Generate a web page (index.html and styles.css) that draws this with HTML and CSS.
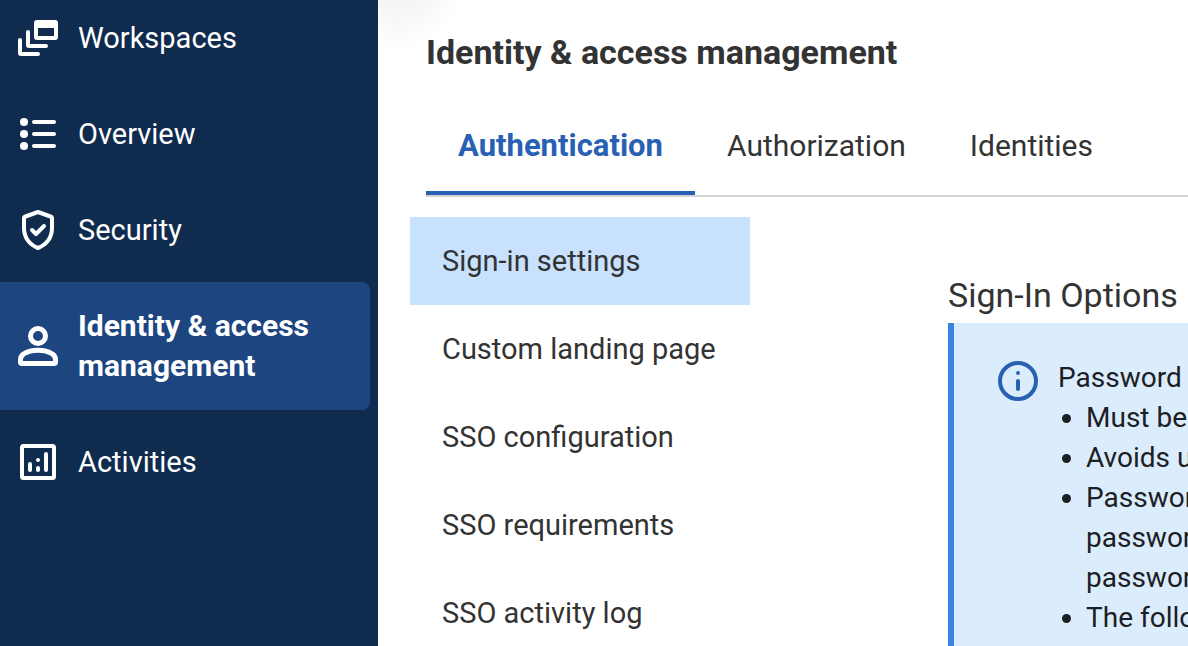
FILE: index.html
```html
<!DOCTYPE html>
<html lang="en">

<head>
    <meta charset="UTF-8" />
    <meta name="viewport" content="width=device-width, initial-scale=1.0" />
    <title>Identity &amp; access management</title>
    <link rel="stylesheet" href="styles.css">
</head>

<body>
    <aside class="sidebar">
        <nav class="menu">
            <a href="#" class="menu-item">
                <svg class="icon" viewBox="0 0 48 48" fill="none" stroke="currentColor" stroke-width="4" stroke-linecap="round" stroke-linejoin="round">
                    <rect x="22" y="8" width="20" height="16" rx="1" />
                    <path d="M22 8h20v5H22z" fill="currentColor" stroke-width="2" />
                    <path d="M14 18v13a1 1 0 0 0 1 1h17" />
                    <path d="M6 26v13a1 1 0 0 0 1 1h17" />
                </svg>
                <span>Workspaces</span>
            </a>
            <a href="#" class="menu-item">
                <svg class="icon" viewBox="0 0 48 48" fill="currentColor">
                    <circle cx="10" cy="12" r="4" />
                    <circle cx="10" cy="24" r="4" />
                    <circle cx="10" cy="36" r="4" />
                    <rect x="18" y="10" width="24" height="4" rx="2" />
                    <rect x="18" y="22" width="24" height="4" rx="2" />
                    <rect x="18" y="34" width="24" height="4" rx="2" />
                </svg>
                <span>Overview</span>
            </a>
            <a href="#" class="menu-item">
                <svg class="icon" viewBox="0 0 48 48" fill="none" stroke="currentColor" stroke-width="4" stroke-linecap="round" stroke-linejoin="round">
                    <path d="M24 6L11.500 10.500Q10 11 10 12.500V22c0 9.500 5.500 17 14 20 8.500-3 14-10.500 14-20v-9.500Q38 11 36.500 10.500z" />
                    <path d="M18 24l4 4 8-8" />
                </svg>
                <span>Security</span>
            </a>
            <a href="#" class="menu-item active">
                <svg class="icon" viewBox="0 0 48 48" fill="none" stroke="currentColor" stroke-width="5" stroke-linejoin="round">
                    <circle cx="24" cy="14" r="7.500" />
                    <path d="M8 41.500h32q1.500 0 1.500-1.500v-2.500c0-2.500-1-4-3-5.500-8-5-21-5-29 0-2 1.500-3 3-3 5.500V40q0 1.500 1.500 1.500z" />
                </svg>
                <span>Identity &amp; access management</span>
            </a>
            <a href="#" class="menu-item">
                <svg class="icon" viewBox="0 0 48 48" fill="none" stroke="currentColor" stroke-width="4" stroke-linecap="round" stroke-linejoin="round">
                    <rect x="8" y="8" width="32" height="32" rx="1.500" />
                    <path d="M16 26v6M24 30v2M24 22h.01M32 16v16" />
                </svg>
                <span>Activities</span>
            </a>
        </nav>
    </aside>

    <main class="main">
        <h1 class="title">Identity &amp; access management</h1>
        <div class="tabs" role="tablist">
            <button class="tab active" role="tab" aria-selected="true">Authentication</button>
            <button class="tab" role="tab" aria-selected="false">Authorization</button>
            <button class="tab" role="tab" aria-selected="false">Identities</button>
        </div>

        <div class="content">
            <nav class="submenu">
                <a href="#" class="submenu-item active">Sign-in settings</a>
                <a href="#" class="submenu-item">Custom landing page</a>
                <a href="#" class="submenu-item">SSO configuration</a>
                <a href="#" class="submenu-item">SSO requirements</a>
                <a href="#" class="submenu-item">SSO activity log</a>
            </nav>

            <section class="options">
                <h2 class="options-title">Sign-In Options</h2>
                <div class="info">
                    <svg class="info-icon" viewBox="0 0 40 40" fill="none" stroke="currentColor" stroke-width="4" stroke-linecap="round">
                        <circle cx="20" cy="20" r="18" />
                        <path d="M20 20v8M20 12h.01" />
                    </svg>
                    <div class="info-text">
                        <p>Password</p>
                        <ul class="rules">
                            <li>Must be</li>
                            <li>Avoids u</li>
                            <li>Passwor<br>passwor<br>passwor</li>
                            <li>The follo</li>
                        </ul>
                    </div>
                </div>
            </section>
        </div>
    </main>
</body>

</html>
```
FILE: styles.css
```css
* {
    margin: 0;
    padding: 0;
    box-sizing: border-box;
}

body {
    display: flex;
    height: 100vh;
    overflow: hidden;
    font-family: Roboto, "Liberation Sans", sans-serif;
    font-size: 29px;
    line-height: 40px;
    color: #333;
    background-color: #fff;
}

a {
    color: inherit;
    text-decoration: none;
}

.sidebar {
    flex: 0 0 378px;
    padding-right: 8px;
    color: #fff;
    background-color: #0f2b4e;
}

.menu {
    display: flex;
    flex-direction: column;
    gap: 8px;
    margin-top: -6px;
}

.menu-item {
    display: flex;
    align-items: center;
    gap: 16px;
    padding: 24px 40px 24px 14px;
    border-radius: 0 8px 8px 0;
}

.menu-item.active {
    font-size: 30px;
    font-weight: bold;
    background-color: #1d4681;
}

.icon {
    flex: none;
    width: 48px;
    height: 48px;
    margin: -4px 0;
}

.main {
    display: flex;
    flex-direction: column;
    flex: 1;
    min-width: 0;
    padding: 32px 0 0 48px;
    background: radial-gradient(circle at 20px -16px, #eeeff1, #fff 64px) no-repeat;
}

.title {
    font-size: 34px;
    line-height: 40px;
}

.tabs {
    display: flex;
    margin-top: 30px;
    border-bottom: 2px solid #d4d4d4;
}

.tab {
    padding: 24px 32px 25px;
    border: none;
    border-bottom: 4px solid transparent;
    font: inherit;
    font-size: 30px;
    color: inherit;
    background: none;
    cursor: pointer;
}

.tab.active {
    border-color: #2860b4;
    font-size: 31px;
    font-weight: bold;
    color: #2860b4;
}

.content {
    display: flex;
    flex: 1;
    gap: 198px;
    margin: 20px 0 0 -16px;
}

.submenu {
    flex: 0 0 340px;
}

.submenu-item {
    display: block;
    padding: 24px 32px;
}

.submenu-item.active {
    background-color: #c8e1fd;
}

.options {
    display: flex;
    flex-direction: column;
    flex: 1;
    min-width: 0;
    padding-top: 58px;
    white-space: nowrap;
}

.options-title {
    font-size: 34px;
    font-weight: normal;
    line-height: 40px;
}

.info {
    display: flex;
    flex: 1;
    gap: 20px;
    margin-top: 8px;
    padding: 35px 0 0 44px;
    border-left: 6px solid #3b84e0;
    font-size: 28px;
    color: #1b2024;
    background-color: #dbecfc;
}

.info-icon {
    flex: none;
    width: 40px;
    height: 40px;
    margin-top: 3px;
    color: #2860b4;
}

.rules {
    padding-left: 28px;
}
```
